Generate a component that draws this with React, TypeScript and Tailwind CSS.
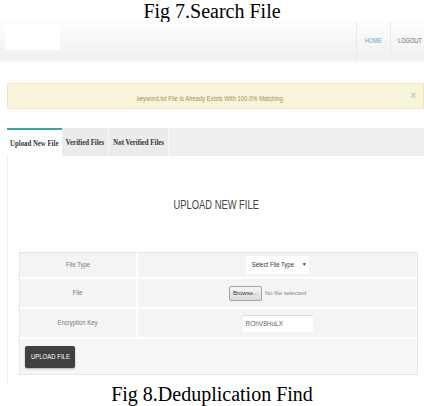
const serif = "font-['Liberation_Serif','Times_New_Roman',serif]";
const sans = "font-['Liberation_Sans',Arial,sans-serif]";

const Navbar = () => (
  <div
    className={`${sans} h-[38px] flex justify-between bg-linear-to-b from-[#fdfdfd] to-[#f0f0f0] shadow-[0_2px_3px_rgba(0,0,0,0.05)]`}>
    <div className="ml-[5px] mt-[3px] w-[55px] h-[25px] bg-white" />
    <div className="flex h-full">
      <div className="w-[34px] border-l border-[#e8e8e8] flex items-center justify-center">
        <span className="text-[7.5px] text-[#5aa9a9] inline-block scale-x-[0.75]">HOME</span>
      </div>
      <div className="w-[34px] border-l border-[#e8e8e8] flex items-center pl-[7px]">
        <span className="text-[7.5px] text-[#666] inline-block scale-x-[0.75] origin-left">LOGOUT</span>
      </div>
    </div>
  </div>
);

const Alert = () => (
  <div
    className={`${sans} ml-[7px] h-[26px] bg-[#f8f4d9] border border-[#ece6c0] grid grid-cols-[1fr_12px] items-center`}>
    <p className="text-center">
      <span className="inline-block text-[7px] text-[#a88f52] scale-x-[0.84]">
        keyword.txt File Is Already Exists With 100.0% Matching
      </span>
    </p>
    <span className="text-[7px] text-[#aaa]">X</span>
  </div>
);

const Tabs = () => (
  <div className={`${serif} ml-[7px] h-[28px] bg-[#efefef] flex font-bold text-[8.5px] text-[#333]`}>
    <div className="w-[55px] bg-white border-t-2 border-[#3aa4a4] flex items-center justify-center">
      <span className="inline-block whitespace-nowrap scale-x-[0.8]">Upload New File</span>
    </div>
    <div className="w-[47px] bg-[#ebebeb] border-r border-[#f8f8f8] flex items-center justify-center">
      <span className="inline-block whitespace-nowrap scale-x-[0.8]">Verified Files</span>
    </div>
    <div className="w-[60px] bg-[#ebebeb] border-r border-[#f8f8f8] flex items-center justify-center">
      <span className="inline-block whitespace-nowrap scale-x-[0.8]">Not Verified Files</span>
    </div>
  </div>
);

const Row = ({ label, children, h }: { label: string; children: React.ReactNode; h: string }) => (
  <div className={`grid grid-cols-[118px_1fr] border-b-2 border-white ${h}`}>
    <div className="border-r-2 border-white flex items-center justify-center text-[7px] text-[#777]">
      <span className="inline-block scale-x-[0.85]">{label}</span>
    </div>
    <div className="flex items-center justify-center">{children}</div>
  </div>
);

const UploadPanel = () => (
  <div className={`${sans} ml-[7px] flex-1 border-l border-[#eeeeee] pt-[40px]`}>
    <div className="h-[16px] text-center leading-[16px]">
      <span className="inline-block text-[13px] text-[#444] scale-x-[0.72]">UPLOAD NEW FILE</span>
    </div>

    <div className="mt-[40px] ml-[11px] mr-[6px] border border-[#e6e6e6] bg-[#f4f4f4]">
      <Row label="File Type" h="h-[26px]">
        <div className="h-[18px] px-[2px] bg-white flex items-center gap-[4px] text-[7px] text-[#333]">
          <span className="inline-block scale-x-[0.85]">Select File Type</span>
          <span className="text-[5px]">▼</span>
        </div>
      </Row>
      <Row label="File" h="h-[30px]">
        <div className="flex items-center gap-[3px] -ml-[20px]">
          <span className="h-[15px] px-[3px] border border-[#a5a5a5] rounded-[2px] bg-linear-to-b from-[#f6f6f6] to-[#dcdcdc] flex items-center text-[6px] text-[#333]">
            Browse...
          </span>
          <span className="text-[6px] text-[#888]">No file selected</span>
        </div>
      </Row>
      <Row label="Encryption Key" h="h-[30px]">
        <div className="w-[70px] h-[17px] bg-white border-t border-[#dcdcdc] flex items-center px-[3px] text-[6.5px] text-[#666]">
          ROhV8HuLX
        </div>
      </Row>
      <div className="h-[35px] flex items-center pl-[5px] bg-[#f6f6f6]">
        <button className="w-[50px] h-[22px] bg-[#404040] rounded-[2px] shadow-[0_1px_2px_rgba(0,0,0,0.3)] text-white text-[7.5px]">
          <span className="inline-block whitespace-nowrap scale-x-[0.8]">UPLOAD FILE</span>
        </button>
      </div>
    </div>
  </div>
);

export default function App() {
  return (
    <div className="w-[424px] h-[406px] overflow-hidden bg-white flex flex-col">
      <p className={`${serif} h-[22px] text-center text-[20px] leading-[22px] text-black`}>Fig 7.Search File</p>
      <Navbar />
      <div className="h-[23px]" />
      <Alert />
      <div className="h-[19px]" />
      <Tabs />
      <UploadPanel />
      <p className={`${serif} h-[22px] text-center text-[20px] leading-[20px] text-black`}>Fig 8.Deduplication Find</p>
    </div>
  );
}
